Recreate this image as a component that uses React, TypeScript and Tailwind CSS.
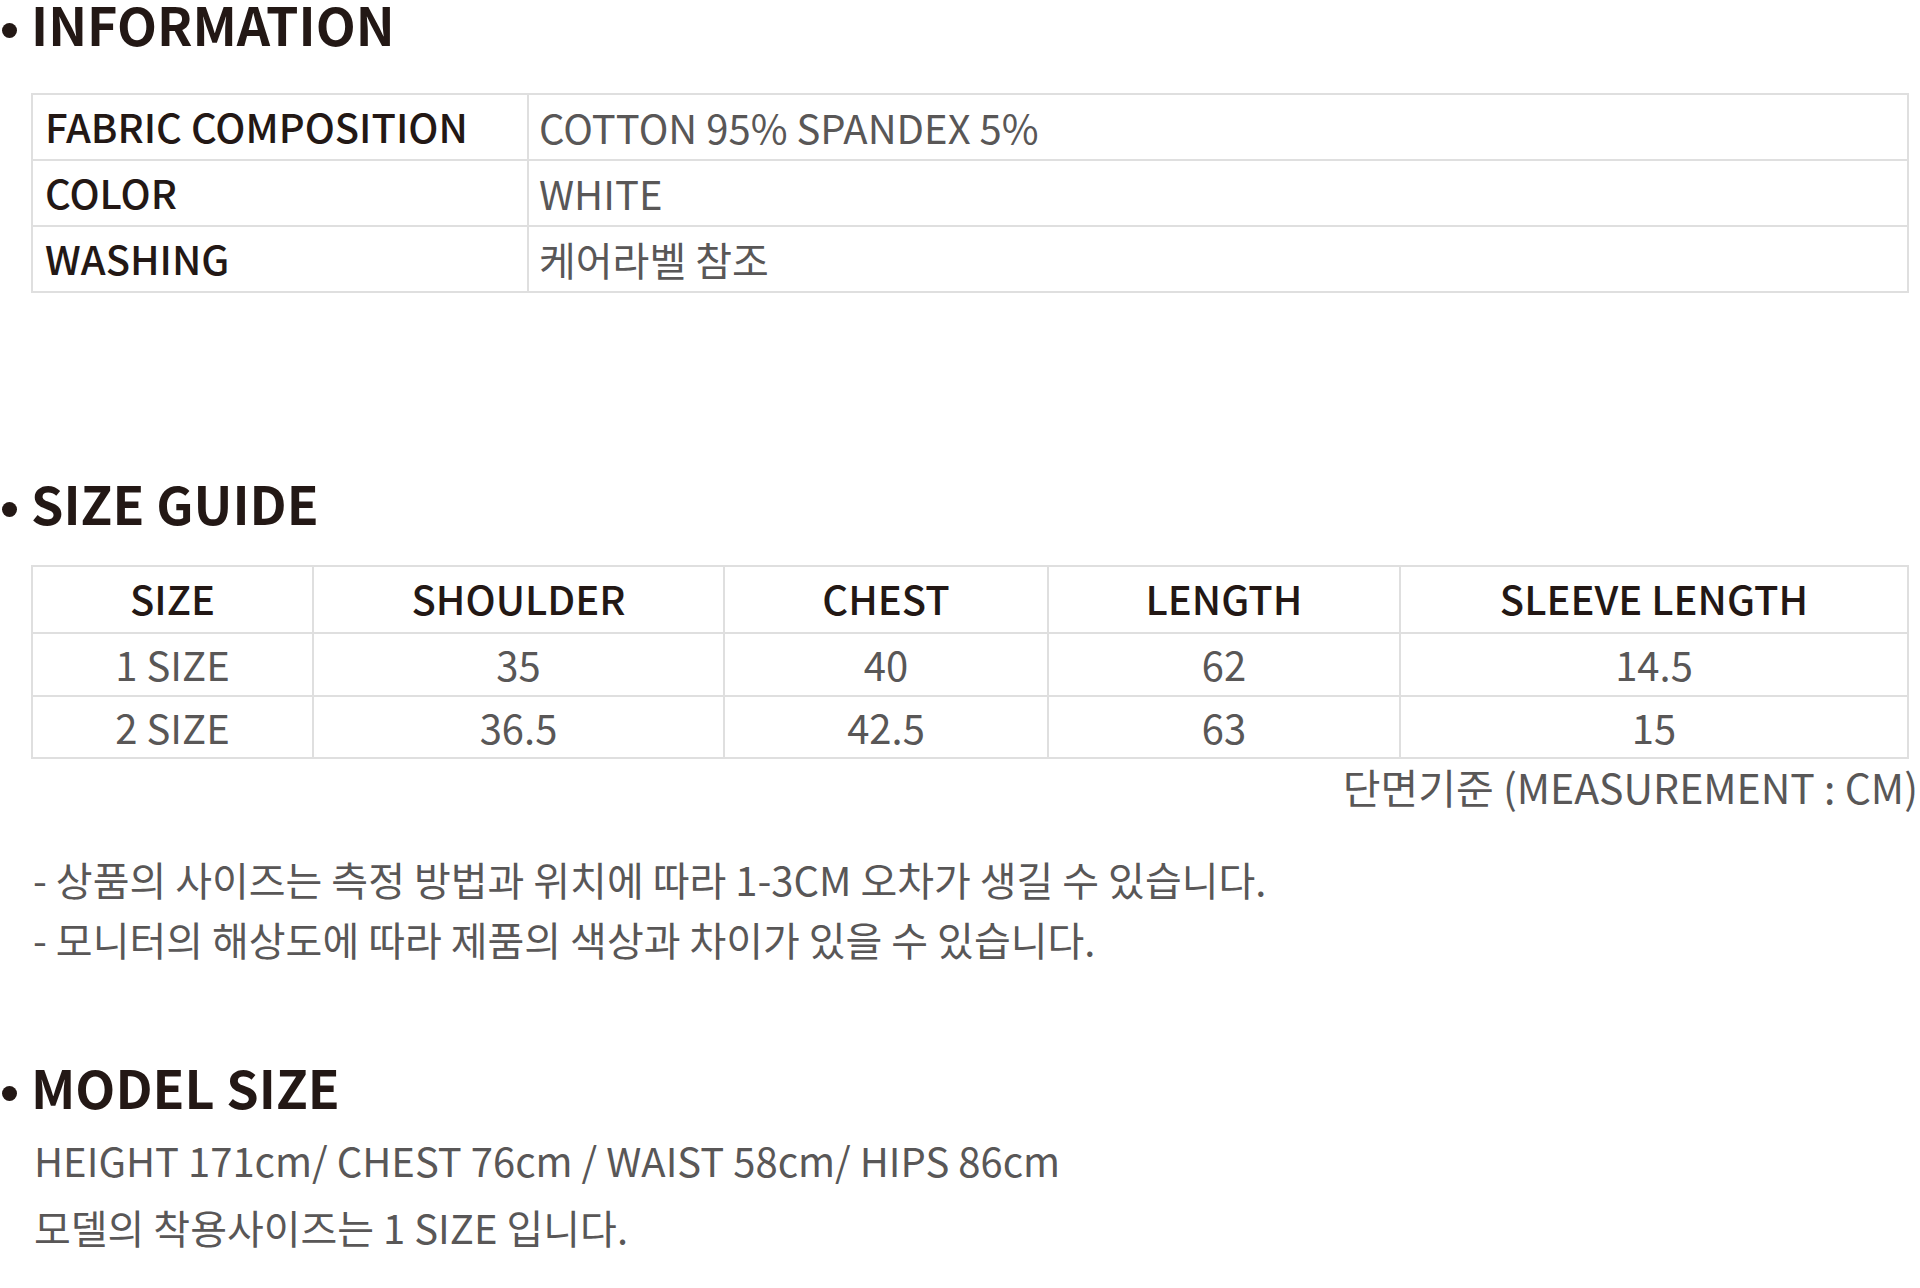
import React from "react";

const dark = "text-[#231815]";
const gray = "text-[#595757]";

function Heading({ children, className = "" }: { children: React.ReactNode; className?: string }) {
  return (
    <div className={`flex items-start h-[45px] ${className}`}>
      <span className="mt-[22px] ml-[2px] mr-[14px] w-[15px] h-[15px] rounded-full bg-[#231815] shrink-0" />
      <span className={`text-[52px] leading-[45px] font-bold ${dark} whitespace-nowrap`}>{children}</span>
    </div>
  );
}

const infoRows = [
  ["FABRIC COMPOSITION", "COTTON 95% SPANDEX 5%"],
  ["COLOR", "WHITE"],
  ["WASHING", "케어라벨 참조"],
];

const sizeHead = ["SIZE", "SHOULDER", "CHEST", "LENGTH", "SLEEVE LENGTH"];
const sizeRows = [
  ["1 SIZE", "35", "40", "62", "14.5"],
  ["2 SIZE", "36.5", "42.5", "63", "15"],
];

export default function App() {
  return (
    <div className="w-[1920px] h-[1288px] bg-white overflow-hidden font-['Noto_Sans_CJK_KR','Noto_Sans',sans-serif]">
      <div className="pt-[1px]">
        <Heading>INFORMATION</Heading>
      </div>

      <div className="mt-[47px] ml-[31px] w-[1878px] border-2 border-[#dfdfdf]">
        {infoRows.map(([k, v], i) => (
          <div
            key={k}
            className={`grid grid-cols-[496px_1fr] ${i < infoRows.length - 1 ? "h-[66px] border-b-2 border-[#dfdfdf]" : "h-[64px]"}`}
          >
            <div className={`border-r-2 border-[#dfdfdf] pl-[12px] text-[40px] leading-[62px] font-medium ${dark} whitespace-nowrap`}>{k}</div>
            <div className={`pl-[10px] text-[40px] leading-[64px] ${gray} whitespace-nowrap`}>{v}</div>
          </div>
        ))}
      </div>

      <Heading className="mt-[187px]">SIZE GUIDE</Heading>

      <div className="mt-[40px] ml-[31px] w-[1878px] border-2 border-[#dfdfdf]">
        <div className="grid grid-cols-[281px_411px_324px_352px_1fr] h-[67px] border-b-2 border-[#dfdfdf]">
          {sizeHead.map((h, i) => (
            <div
              key={h}
              className={`text-center text-[40px] leading-[63px] font-medium ${dark} whitespace-nowrap ${i < 4 ? "border-r-2 border-[#dfdfdf]" : ""}`}
            >
              {h}
            </div>
          ))}
        </div>
        {sizeRows.map((r, ri) => (
          <div
            key={ri}
            className={`grid grid-cols-[281px_411px_324px_352px_1fr] ${ri === 0 ? "h-[63px] border-b-2 border-[#dfdfdf]" : "h-[60px]"}`}
          >
            {r.map((c, i) => (
              <div
                key={i}
                className={`text-center text-[40px] ${ri === 0 ? "leading-[61px]" : "leading-[60px]"} ${gray} whitespace-nowrap ${i < 4 ? "border-r-2 border-[#dfdfdf]" : ""}`}
              >
                {c}
              </div>
            ))}
          </div>
        ))}
      </div>

      <div className={`mt-[2px] pr-[2px] text-right text-[41px] leading-[50px] ${gray} whitespace-nowrap`}>
        단면기준 (MEASUREMENT : CM)
      </div>

      <div className={`mt-[39px] pl-[33px] text-[40px] leading-[58px] ${gray} whitespace-nowrap`}>
        <p>- 상품의 사이즈는 측정 방법과 위치에 따라 1-3CM 오차가 생길 수 있습니다.</p>
        <p className="mt-[2px]">- 모니터의 해상도에 따라 제품의 색상과 차이가 있을 수 있습니다.</p>
      </div>

      <Heading className="mt-[96px]">MODEL SIZE</Heading>

      <div className={`mt-[18px] pl-[34px] text-[40px] leading-[67px] ${gray} whitespace-nowrap`}>
        <p>HEIGHT 171cm/ CHEST 76cm / WAIST 58cm/ HIPS 86cm</p>
        <p>모델의 착용사이즈는 1 SIZE 입니다.</p>
      </div>
    </div>
  );
}
